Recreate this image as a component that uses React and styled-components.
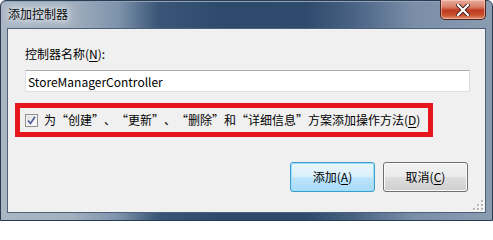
import React from "react";
import styled, { createGlobalStyle } from "styled-components";

const GlobalStyle = createGlobalStyle`
  html, body {
    margin: 0;
    padding: 0;
    background: #ffffff;
  }
  body {
    font-family: "Noto Sans CJK SC", "Noto Sans", sans-serif;
    text-spacing-trim: space-all;
  }
`;

const Window = styled.div`
  position: relative;
  box-sizing: border-box;
  width: 493px;
  height: 221px;
  border: 1px solid #2a3a4f;
  border-radius: 6px 6px 0 0;
  background: linear-gradient(90deg, #aab6c4 0%, #a3b0bf 14%, #7d92ab 24%, #3a5577 32%, #2d4a6c 45%, #2e4a6c 62%, #4a6385 72%, #7a8ea8 84%, #8a9cb1 100%);
  box-shadow: inset 0 1px 0 #8fa3bb;
  display: flex;
  flex-direction: column;
`;

const TitleBar = styled.div`
  height: 27px;
  display: flex;
  align-items: flex-start;
  justify-content: space-between;
  padding: 0 6px 0 7px;
`;

const Title = styled.span`
  align-self: center;
  font-size: 12px;
  line-height: 16px;
  color: #0a0a0a;
  padding: 0 2px 1px 0;
  text-shadow: 0 0 5px #eef2f6, 0 0 9px #e4e9ef, 0 0 12px #dde3ea;
`;

const CloseButton = styled.div`
  margin-top: -1px;
  width: 46px;
  height: 20px;
  box-sizing: border-box;
  border: 1px solid #4a2620;
  border-top: none;
  border-radius: 0 0 5px 5px;
  background: linear-gradient(180deg, #e9ab9c 0%, #d9826d 35%, #c13a22 55%, #c9532f 80%, #e0916f 100%);
  box-shadow: inset 0 0 0 1px rgba(255, 220, 210, 0.5);
  display: flex;
  align-items: center;
  justify-content: center;
`;

const Client = styled.div`
  position: relative;
  flex: 1;
  margin: 0 6px 7px 6px;
  border: 1px solid #4d6078;
  background: #f0f0f0;
  display: flex;
  flex-direction: column;
  padding: 17px 16px 0 17px;
  font-size: 12px;
  color: #000;
`;

const Label = styled.div`
  line-height: 16px;
  height: 16px;
`;

const Key = styled.span`
  text-decoration: underline;
  text-underline-offset: 2px;
`;

const TextBox = styled.div`
  margin-top: 8px;
  height: 22px;
  box-sizing: border-box;
  width: 445px;
  border: 1px solid #dbdfe6;
  border-top-color: #abadb3;
  background: #ffffff;
  padding: 0 2px;
  display: flex;
  align-items: center;
  font-size: 12px;
`;

const Highlight = styled.div`
  margin: 11px 0 0 -10px;
  width: 418px;
  height: 34px;
  box-sizing: border-box;
  border: 5px solid #e8141c;
  padding: 0 5px;
  display: flex;
  align-items: center;
  gap: 6px;
`;

const CheckBox = styled.div`
  width: 13px;
  height: 13px;
  box-sizing: border-box;
  border: 1px solid #8e8f8f;
  background: linear-gradient(135deg, #dcdcdc 0%, #f6f6f6 70%, #ffffff 100%);
  box-shadow: inset 0 0 0 1px #f4f4f4;
  display: flex;
  align-items: center;
  justify-content: center;
  flex-shrink: 0;
`;

const CheckText = styled.span`
  line-height: 16px;
  white-space: nowrap;
`;

const ButtonRow = styled.div`
  margin-top: 25px;
  display: flex;
  justify-content: flex-end;
  gap: 8px;
  padding-right: 1px;
`;

const Button = styled.div`
  width: 85px;
  height: 30px;
  box-sizing: border-box;
  border-radius: 3px;
  border: 1px solid ${(p) => (p.$default ? "#3c9ccf" : "#707070")};
  background: ${(p) =>
    p.$default
      ? "linear-gradient(180deg, #eaf6fd 0%, #d9f0fc 48%, #bee6fd 52%, #a7d9f5 100%)"
      : "linear-gradient(180deg, #f2f2f2 0%, #ebebeb 48%, #dddddd 52%, #cfcfcf 100%)"};
  box-shadow: ${(p) =>
    p.$default ? "inset 0 0 0 1px #9de0f5" : "inset 0 0 0 1px #fbfbfb"};
  display: flex;
  align-items: center;
  justify-content: center;
  font-size: 12px;
  line-height: 16px;
`;

const Grip = styled.svg`
  position: absolute;
  right: 1px;
  bottom: 1px;
`;

function CloseGlyph() {
  return (
    <svg width="14" height="12" viewBox="0 0 14 12">
      <path d="M2 1 L12 11 M12 1 L2 11" stroke="#3a1a14" strokeWidth="4" strokeLinecap="square" />
      <path d="M2 1 L12 11 M12 1 L2 11" stroke="#ffffff" strokeWidth="2.2" strokeLinecap="square" />
    </svg>
  );
}

function CheckMark() {
  return (
    <svg width="9" height="9" viewBox="0 0 9 9">
      <path d="M1 4.5 L3.5 7.5 L8 0.8" fill="none" stroke="#4a5a95" strokeWidth="1.6" />
    </svg>
  );
}

function SizeGrip() {
  const dots = [
    [9, 1], [9, 5], [5, 5], [9, 9], [5, 9], [1, 9],
  ];
  return (
    <Grip width="12" height="12" viewBox="0 0 12 12">
      {dots.map(([x, y], i) => (
        <g key={i}>
          <rect x={x + 1} y={y + 1} width="2" height="2" fill="#ffffff" />
          <rect x={x} y={y} width="2" height="2" fill="#b8b8b8" />
        </g>
      ))}
    </Grip>
  );
}

export default function App() {
  return (
    <>
      <GlobalStyle />
      <Window>
        <TitleBar>
          <Title>添加控制器</Title>
          <CloseButton>
            <CloseGlyph />
          </CloseButton>
        </TitleBar>
        <Client>
          <Label>
            控制器名称(<Key>N</Key>):
          </Label>
          <TextBox>StoreManagerController</TextBox>
          <Highlight>
            <CheckBox>
              <CheckMark />
            </CheckBox>
            <CheckText lang="zh-CN">
              为“创建”、“更新”、“删除”和“详细信息”方案添加操作方法(<Key>D</Key>)
            </CheckText>
          </Highlight>
          <ButtonRow>
            <Button $default>
              添加(<Key>A</Key>)
            </Button>
            <Button>
              取消(<Key>C</Key>)
            </Button>
          </ButtonRow>
          <SizeGrip />
        </Client>
      </Window>
    </>
  );
}
